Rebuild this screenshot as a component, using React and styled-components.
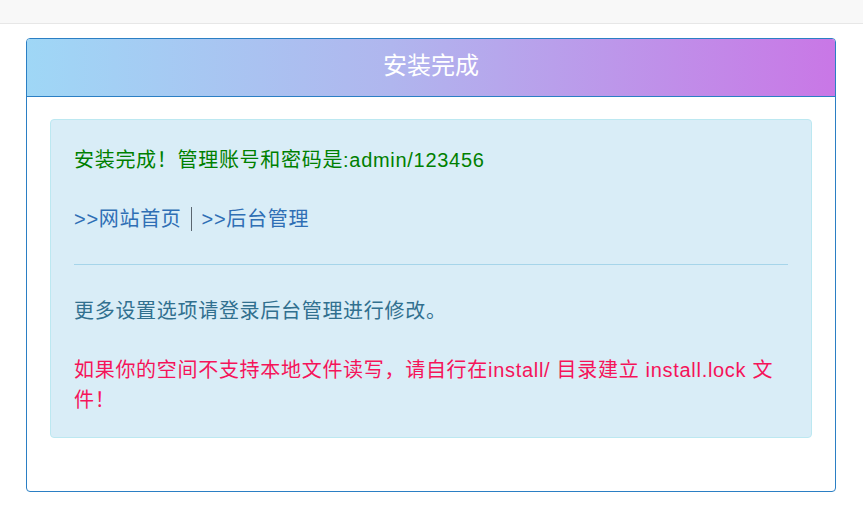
import styled, { createGlobalStyle } from 'styled-components';

const GlobalStyle = createGlobalStyle`
  body {
    margin: 0;
    background: #fff;
    font-family: "Liberation Sans", "Noto Sans CJK SC", sans-serif;
  }
`;

const TopBar = styled.div`
  height: 23px;
  background-color: #f8f8f8;
  border-bottom: 1px solid #e7e7e7;
`;

const Main = styled.div`
  margin: 14px 27px 0 26px;
`;

const Panel = styled.div`
  border: 1px solid #2b7fc4;
  border-radius: 4px;
  overflow: hidden;
  background: #fff;
`;

const Heading = styled.div`
  height: 58px;
  display: flex;
  align-items: center;
  justify-content: center;
  background: linear-gradient(90deg, #9fd7f6 0%, #b0b6ee 45%, #c977e6 100%);
  border-bottom: 1px solid #2b7fc4;
  color: #fff;
  font-size: 24px;
  line-height: 30px;
  padding-bottom: 3px;
  box-sizing: border-box;
`;

const Body = styled.div`
  padding: 22px 23px 53px;
`;

const Alert = styled.div`
  background-color: #d9edf7;
  border: 1px solid #bce8f1;
  border-radius: 4px;
  padding: 25px 23px 22px;
  font-size: 20px;
  letter-spacing: 0.7px;
  line-height: 30px;
  color: #31708f;
`;

const Line = styled.p`
  margin: 0 0 ${(p) => p.gap || 0}px;
  color: ${(p) => p.color || '#31708f'};
`;

const Link = styled.a`
  color: #2f6fb5;
  text-decoration: none;
`;

const Sep = styled.span`
  display: inline-block;
  width: 1px;
  height: 24px;
  background: #5a6670;
  vertical-align: -5px;
  margin: 0 10px 0 9px;
`;

const Divider = styled.hr`
  border: 0;
  border-top: 1px solid #a6d5ea;
  margin: 30px 0 31px;
`;

export default function App() {
  return (
    <>
      <GlobalStyle />
      <TopBar />
      <Main>
        <Panel>
          <Heading>安装完成</Heading>
          <Body>
            <Alert>
              <Line color="#008000" gap={29}>
                安装完成！管理账号和密码是:admin/123456
              </Line>
              <Line>
                <Link href="#">&gt;&gt;网站首页</Link>
                <Sep />
                <Link href="#">&gt;&gt;后台管理</Link>
              </Line>
              <Divider />
              <Line gap={29}>更多设置选项请登录后台管理进行修改。</Line>
              <Line color="#f5145a">
                如果你的空间不支持本地文件读写，请自行在install/ 目录建立 install.lock 文件！
              </Line>
            </Alert>
          </Body>
        </Panel>
      </Main>
    </>
  );
}
